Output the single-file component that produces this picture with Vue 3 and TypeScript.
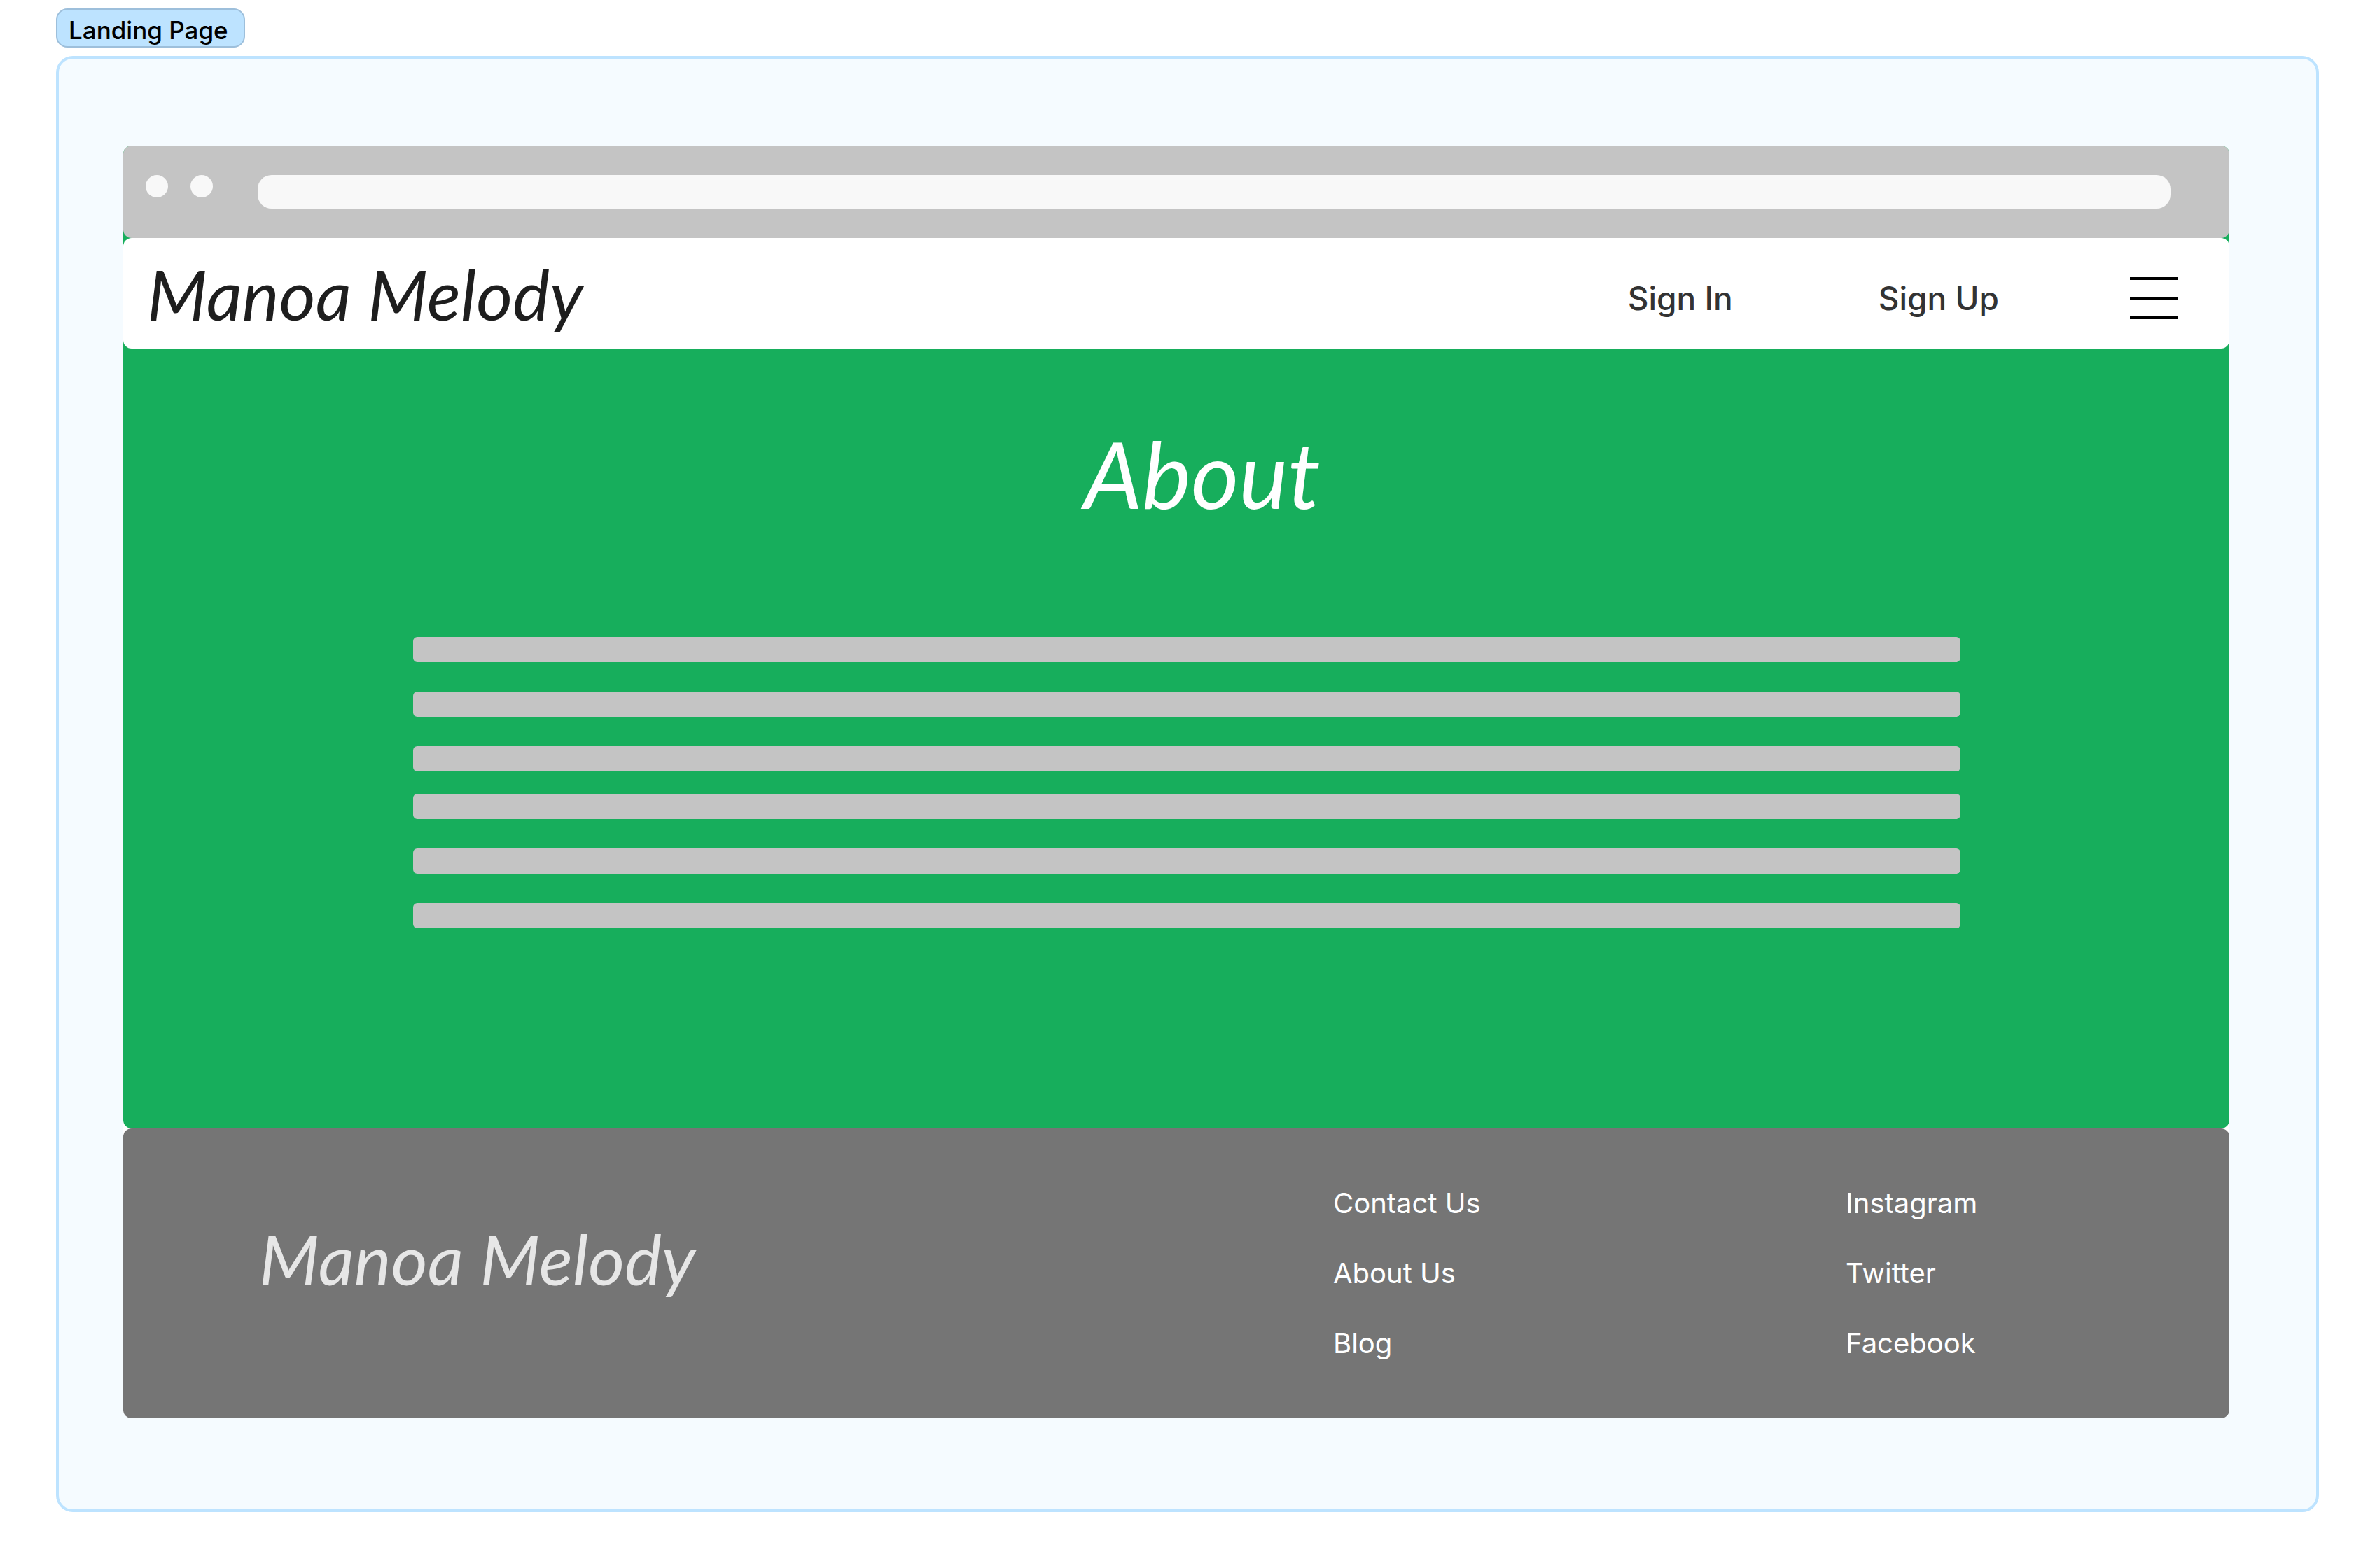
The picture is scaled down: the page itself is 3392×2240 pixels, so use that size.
<script setup lang="ts">
interface FooterLink {
  label: string
  href: string
}

const brand = 'Manoa Melody'

const footerColumns: { name: string; links: FooterLink[] }[] = [
  {
    name: 'Site',
    links: [
      { label: 'Contact Us', href: '#contact' },
      { label: 'About Us', href: '#about' },
      { label: 'Blog', href: '#blog' },
    ],
  },
  {
    name: 'Social',
    links: [
      { label: 'Instagram', href: '#instagram' },
      { label: 'Twitter', href: '#twitter' },
      { label: 'Facebook', href: '#facebook' },
    ],
  },
]

// Placeholder copy: two paragraphs of three lines each
const paragraphs: number[] = [3, 3]
</script>

<template>
  <div class="canvas">
    <div class="tag">Landing Page</div>
    <section class="frame">
      <div class="browser">
        <div class="site">
          <div class="chrome">
            <span class="dot"></span>
            <span class="dot"></span>
            <input class="address" type="text" aria-label="Address" />
          </div>

          <header class="topbar">
            <a class="brand" href="#home">{{ brand }}</a>
            <nav class="actions">
              <a class="action" href="#sign-in">Sign In</a>
              <a class="action" href="#sign-up">Sign Up</a>
              <button class="menu" type="button" aria-label="Menu">
                <span class="menu-line"></span>
                <span class="menu-line"></span>
                <span class="menu-line"></span>
              </button>
            </nav>
          </header>

          <main class="about">
            <h1 class="heading">About</h1>
            <div class="copy">
              <div v-for="(lines, p) in paragraphs" :key="p" class="paragraph">
                <div v-for="n in lines" :key="n" class="line"></div>
              </div>
            </div>
          </main>
        </div>

        <footer class="footer">
          <a class="brand brand-footer" href="#home">{{ brand }}</a>
          <ul v-for="column in footerColumns" :key="column.name" class="links" :aria-label="column.name">
            <li v-for="link in column.links" :key="link.label">
              <a class="link" :href="link.href">{{ link.label }}</a>
            </li>
          </ul>
        </footer>
      </div>
    </section>
  </div>
</template>

<style>
body {
  background: #ffffff;
}
</style>

<style scoped>
.canvas {
  box-sizing: border-box;
  display: flex;
  flex-direction: column;
  align-items: flex-start;
  gap: 12px;
  padding: 12px 80px 80px;
  font-family: Inter, "Liberation Sans", sans-serif;
  font-weight: 500;
}

.tag {
  box-sizing: border-box;
  padding: 7px 22px 1px 16px;
  border: 2px solid #9dbfdb;
  border-radius: 16px;
  background: #bde3ff;
  color: #000000;
  font-size: 35px;
  line-height: 44px;
}

.frame {
  box-sizing: border-box;
  align-self: stretch;
  padding: 124px 124px 130px 92px;
  border: 4px solid #bde3ff;
  border-radius: 24px;
  background: #f5fbff;
}

.browser {
  border-radius: 12px;
  background: #ffffff;
}

.site {
  border-radius: 12px;
  background: #17ae5c;
}

.chrome {
  display: flex;
  align-items: flex-start;
  gap: 32px;
  padding: 42px 84px 42px 32px;
  border-radius: 12px;
  background: #c4c4c4;
}

.dot {
  width: 32px;
  height: 32px;
  border-radius: 50%;
  background: #f8f8f8;
}

.address {
  box-sizing: border-box;
  flex: 1;
  min-width: 0;
  height: 48px;
  margin: 0 0 0 32px;
  padding: 0 20px;
  border: 0;
  border-radius: 20px;
  background: #f8f8f8;
  color: #333333;
  font: inherit;
  font-size: 28px;
}

.topbar {
  display: flex;
  align-items: center;
  justify-content: space-between;
  padding: 19px 74px 19px 34px;
  border-radius: 12px;
  background: #ffffff;
}

.brand {
  color: #1e1e1e;
  font-family: Lato, "Liberation Sans", sans-serif;
  font-size: 100px;
  font-style: italic;
  font-weight: 400;
  line-height: 120px;
  text-decoration: none;
  white-space: nowrap;
}

.actions {
  display: flex;
  align-items: center;
  padding-top: 14px;
}

.action {
  margin-right: 208px;
  color: #333333;
  font-size: 46px;
  line-height: 60px;
  text-decoration: none;
  white-space: nowrap;
}

.action + .action {
  margin-right: 187px;
}

.menu {
  display: flex;
  flex-direction: column;
  gap: 24px;
  width: 68px;
  padding: 0;
  border: 0;
  background: none;
}

.menu-line {
  height: 4px;
  background: #000000;
}

.about {
  padding: 98px 384px 286px 414px;
}

.heading {
  margin: 0 0 154px;
  padding-left: 44px;
  color: #ffffff;
  font-family: Lato, "Liberation Sans", sans-serif;
  font-size: 132px;
  font-style: italic;
  font-weight: 400;
  line-height: 160px;
  text-align: center;
}

.copy {
  display: flex;
  flex-direction: column;
  gap: 32px;
}

.paragraph {
  display: flex;
  flex-direction: column;
  gap: 42px;
}

.line {
  height: 36px;
  border-radius: 6px;
  background: #c4c4c4;
}

.footer {
  display: grid;
  grid-template-columns: 1fr 732px 548px;
  align-items: center;
  padding: 77px 0;
  border-radius: 12px;
  background: #757575;
}

.brand-footer {
  padding: 0 0 44px 194px;
  color: #e6e6e6;
}

.links {
  display: flex;
  flex-direction: column;
  gap: 40px;
  margin: 0;
  padding: 0;
  list-style: none;
  line-height: 60px;
}

.link {
  display: block;
  width: max-content;
  color: #ffffff;
  font-size: 40px;
  font-weight: 400;
  text-decoration: none;
}
</style>
